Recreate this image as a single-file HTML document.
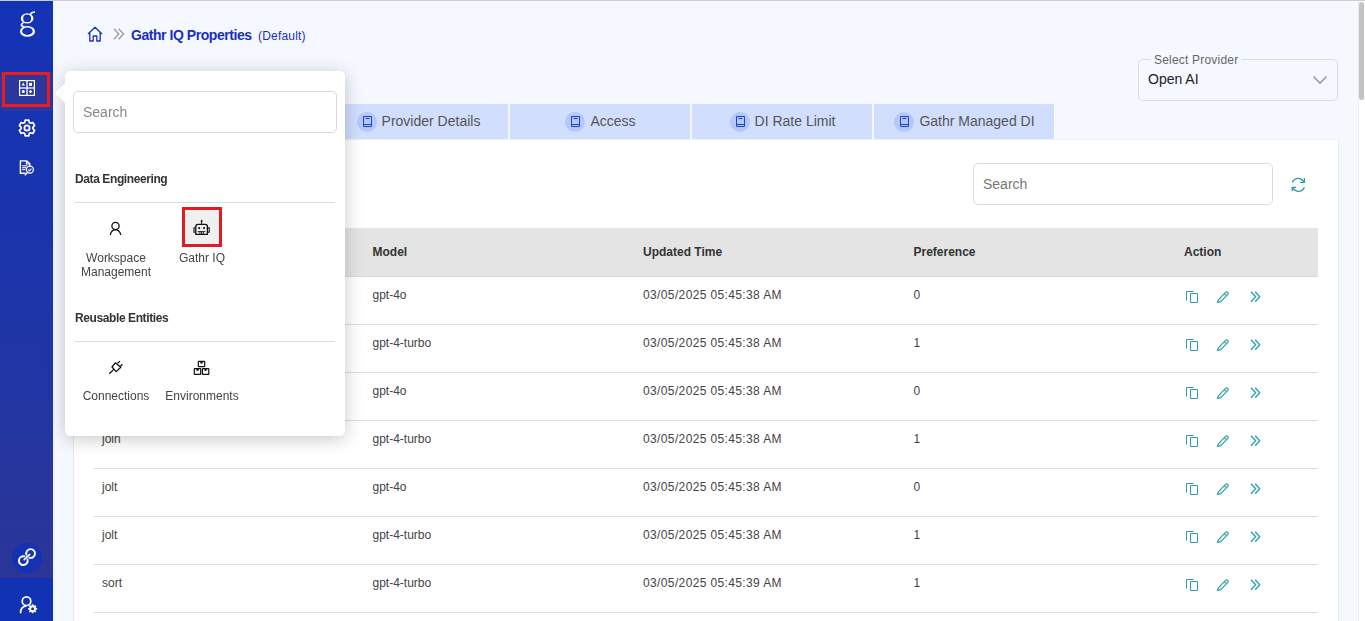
<!DOCTYPE html>
<html><head><meta charset="utf-8">
<style>
*{box-sizing:border-box;margin:0;padding:0}
html,body{width:1365px;height:621px;overflow:hidden}
body{position:relative;background:#f5f8fe;font-family:"Liberation Sans",sans-serif;color:#444}
.abs{position:absolute}
#topline{position:absolute;left:0;top:0;width:1365px;height:1px;background:#cdcdcd;z-index:50}
#sb{position:absolute;left:0;top:0;width:53px;height:621px;background:linear-gradient(#1333b6 0px,#1934ae 190px,#2036a6 350px,#2b3696 578px)}
#sbbot{position:absolute;left:0;top:578px;width:53px;height:43px;background:#1232b4}
#sel{position:absolute;left:0;top:72px;width:53px;height:39px;background:#2a379c;border-radius:0 0 3px 4px}
#redbox{position:absolute;left:2px;top:72px;width:48px;height:35px;border:3px solid #e91c24}
#sbline{position:absolute;left:53px;top:0;width:1px;height:621px;background:#eef1f7}
/* scrollbar */
#sctrack{position:absolute;left:1358px;top:1px;width:7px;height:620px;background:#fff;border-left:1px solid #ececec}
#scthumb{position:absolute;left:1359px;top:2px;width:5px;height:98px;background:#c3c3c3;border-radius:3px}
/* breadcrumb */
.bc-title{position:absolute;left:131px;top:27px;font-size:14px;font-weight:bold;letter-spacing:-0.45px;color:#1a2fbe;white-space:nowrap}
.bc-def{position:absolute;left:258px;top:29px;font-size:12px;letter-spacing:0.2px;color:#1a2fbe;white-space:nowrap}
/* select provider */
#prov{position:absolute;left:1138px;top:59px;width:200px;height:42px;border:1px solid #dcdcdc;border-radius:5px}
#provlbl{position:absolute;left:1150px;top:53px;padding:0 4px;background:#f5f8fe;font-size:12px;letter-spacing:0.2px;color:#666;white-space:nowrap}
#provval{position:absolute;left:1148px;top:71px;font-size:14px;color:#222;white-space:nowrap}
/* tabs */
.tab{position:absolute;top:104px;height:35px;width:180px;background:#d1defe;display:flex;align-items:center;justify-content:center;font-size:14px;color:#555;white-space:nowrap;padding-bottom:1px}
.tab .ic{width:20px;height:20px;border-radius:50%;background:#b3c8fb;margin-left:1px;margin-right:5px;position:relative;top:1px;flex:none}
.tab .ic svg{position:absolute;left:5px;top:3px}
/* card */
#card{position:absolute;left:73px;top:139px;width:1266px;height:482px;background:#fff;border-top:1px solid #eef0f4;border-left:1px solid #e3e7ee;border-right:1px solid #e9ecf1}
#tsearch{position:absolute;left:973px;top:163px;width:300px;height:42px;border:1px solid #dcdcdc;border-radius:5px;background:#fff}
#tsearch span{position:absolute;left:9px;top:11.5px;font-size:14px;color:#777}
/* table */
#thead{position:absolute;left:94px;top:228px;width:1224px;height:49px;background:#e4e4e4;border-bottom:1px solid #d9d9d9}
.th{position:absolute;top:245px;font-size:12px;font-weight:bold;color:#333;white-space:nowrap}
.row{position:absolute;left:94px;width:1224px;height:48px;border-bottom:1px solid #dedede}
.td{position:absolute;font-size:12px;color:#444;white-space:nowrap}
.dt{letter-spacing:0.37px}
.acts{position:absolute;left:1186px}
/* popover */
#pop{position:absolute;left:65px;top:71px;width:280px;height:365px;background:#fff;border-radius:5px;will-change:transform;box-shadow:0 3px 18px rgba(0,0,0,0.22);z-index:20}
#poparrow{position:absolute;left:55px;top:83px;width:0;height:0;border-top:10px solid transparent;border-bottom:10px solid transparent;border-right:10px solid #fff;z-index:21}
#psearch{position:absolute;left:8px;top:20px;width:264px;height:42px;border:1px solid #d9d9d9;border-radius:5px}
#psearch span{position:absolute;left:9px;top:12px;font-size:14px;color:#888}
.sect{position:absolute;left:10px;font-size:12px;font-weight:bold;letter-spacing:-0.4px;color:#333;white-space:nowrap}
.divd{position:absolute;left:10px;width:260px;height:1px;background:#d6dde6}
.item{position:absolute;width:86px;text-align:center;font-size:12px;color:#444;line-height:14px}
</style></head>
<body>
<div id="topline"></div>
<div id="sb"></div>
<div id="sbbot"></div>
<div id="sel"></div>
<div id="redbox"></div>
<div id="sbline"></div>

<!-- sidebar icons -->
<svg class="abs" style="left:12px;top:5px" width="30" height="37" viewBox="12 5 30 37">
 <path fill="#fff" fill-rule="evenodd" d="M20.85 18.40 a6.30 5.20 0 1 0 12.60 0 a6.30 5.20 0 1 0 -12.60 0Z M23.15 18.45 a4.00 3.85 0 1 0 8.00 0 a4.00 3.85 0 1 0 -8.00 0Z"/>
 <path fill="#fff" fill-rule="evenodd" d="M20.00 31.40 a7.50 5.40 0 1 0 15.00 0 a7.50 5.40 0 1 0 -15.00 0Z M22.10 31.20 a5.30 3.70 0 1 0 10.60 0 a5.30 3.70 0 1 0 -10.60 0Z"/>
 <path d="M30.4 14.4 Q31.4 12 35 12" fill="none" stroke="#fff" stroke-width="1.7"/>
 <path d="M23.4 22.6 Q20.8 24.2 21.5 25.8 Q22.2 26.6 24.6 26.4" fill="none" stroke="#fff" stroke-width="1.5"/>
</svg>
<svg class="abs" style="left:19px;top:80px" width="16" height="16" viewBox="0 0 16 16">
 <rect x="0.6" y="0.6" width="14.8" height="14.8" fill="none" stroke="#fff" stroke-width="1.2"/>
 <line x1="8" y1="0.6" x2="8" y2="15.4" stroke="#fff" stroke-width="1.3"/>
 <line x1="0.6" y1="8" x2="15.4" y2="8" stroke="#fff" stroke-width="1.3"/>
 <path d="M4.3 2.6 L6 5.5 L2.6 5.5Z" fill="#fff"/>
 <rect x="10" y="2.9" width="3" height="3" fill="#fff"/>
 <circle cx="4.3" cy="11.6" r="1.5" fill="#fff"/>
 <path d="M11.5 9.7 L13.2 11.6 L11.5 13.5 L9.8 11.6Z" fill="#fff"/>
</svg>
<svg class="abs" style="left:18px;top:119px" width="18" height="18" viewBox="0 0 18 18"><path fill="none" stroke="#fff" stroke-width="1.7" stroke-linejoin="round" d="M6.75 3.44 L7.20 1.21 L10.80 1.21 L11.25 3.44 L12.69 4.27 L14.85 3.54 L16.65 6.66 L14.94 8.16 L14.94 9.84 L16.65 11.34 L14.85 14.46 L12.69 13.73 L11.25 14.56 L10.80 16.79 L7.20 16.79 L6.75 14.56 L5.31 13.73 L3.15 14.46 L1.35 11.34 L3.06 9.84 L3.06 8.16 L1.35 6.66 L3.15 3.54 L5.31 4.27Z"/><circle cx="9" cy="9" r="2.6" fill="none" stroke="#fff" stroke-width="1.8"/></svg>
<svg class="abs" style="left:19px;top:160px" width="16" height="16" viewBox="0 0 16 16">
 <path fill="none" stroke="#fff" stroke-width="1.4" d="M6.6 13.2H1.4V0.9h6.4l3 3v2.6"/>
 <path fill="none" stroke="#fff" stroke-width="1.2" d="M7.4 1v3h3"/>
 <line x1="3.2" y1="5.8" x2="8.2" y2="5.8" stroke="#fff" stroke-width="1.1"/>
 <line x1="3.2" y1="7.7" x2="7" y2="7.7" stroke="#fff" stroke-width="1.1"/>
 <line x1="3.2" y1="9.6" x2="6.2" y2="9.6" stroke="#fff" stroke-width="1.1"/>
 <circle cx="10.9" cy="9.6" r="3.5" fill="none" stroke="#fff" stroke-width="1.3"/>
 <path fill="none" stroke="#fff" stroke-width="1.2" d="M9.3 9.7l1.1 1.1 2-2.2"/>
 <line x1="8.6" y1="12.3" x2="5.8" y2="15.4" stroke="#fff" stroke-width="1.3"/>
</svg>
<div class="abs" style="left:12px;top:543px;width:30px;height:30px;border-radius:50%;background:#1632b4"></div>
<svg class="abs" style="left:16px;top:546px" width="22" height="22" viewBox="16 546 22 22"><g fill="none" stroke="#fff" stroke-linecap="round">
<path stroke-width="1.9" d="M26.35 554.64 A4.40 4.40 0 1 1 29.46 557.75"/><path stroke-width="1.9" d="M27.55 559.46 A4.40 4.40 0 1 1 24.44 556.35"/><path stroke-width="1.6" d="M24.2 559.7 L29.7 554.4"/></g></svg>
<svg class="abs" style="left:18px;top:594px" width="22" height="22" viewBox="18 594 22 22">
<circle cx="26.5" cy="601.2" r="4.3" fill="none" stroke="#fff" stroke-width="1.7"/>
<path d="M20.6 612.6 Q20.8 606.8 25.6 606.2" fill="none" stroke="#fff" stroke-width="1.7" stroke-linecap="round"/>
<path fill="#fff" fill-rule="evenodd" d="M35.75 607.81 L37.13 608.00 L37.13 609.60 L35.75 609.79 L35.53 610.32 L36.37 611.44 L35.24 612.57 L34.12 611.73 L33.59 611.95 L33.40 613.33 L31.80 613.33 L31.61 611.95 L31.08 611.73 L29.96 612.57 L28.83 611.44 L29.67 610.32 L29.45 609.79 L28.07 609.60 L28.07 608.00 L29.45 607.81 L29.67 607.28 L28.83 606.16 L29.96 605.03 L31.08 605.87 L31.61 605.65 L31.80 604.27 L33.40 604.27 L33.59 605.65 L34.12 605.87 L35.24 605.03 L36.37 606.16 L35.53 607.28Z M31.10 608.80 a1.5 1.5 0 1 0 3 0 a1.5 1.5 0 1 0 -3 0Z"/>
</svg>

<!-- scrollbar -->
<div id="sctrack"></div>
<div id="scthumb"></div>

<!-- breadcrumb -->
<svg class="abs" style="left:87px;top:26px" width="16" height="16" viewBox="0 0 16 16">
 <path fill="none" stroke="#1a2fbe" stroke-width="1.3" stroke-linejoin="round" d="M1 8 L8 1.2 L15 8 M2.8 6.5 V15 H6.2 V10 H9.8 V15 H13.2 V6.5"/>
</svg>
<svg class="abs" style="left:113px;top:28px" width="12" height="12" viewBox="0 0 12 12">
 <path fill="none" stroke="#9a9a9a" stroke-width="1.3" d="M1 0.8 L5.8 6 L1 11.2 M5.6 0.8 L10.6 6 L5.6 11.2"/>
</svg>
<div class="bc-title">Gathr IQ Properties</div>
<div class="bc-def">(Default)</div>

<!-- provider select -->
<div id="prov"></div>
<div id="provlbl">Select Provider</div>
<div id="provval">Open AI</div>
<svg class="abs" style="left:1313px;top:76px" width="14" height="8" viewBox="0 0 14 8">
 <path fill="none" stroke="#888" stroke-width="1.2" d="M0.5 0.5 L7 7.2 L13.5 0.5"/>
</svg>

<!-- tabs -->
<div class="tab" style="left:146px">Properties</div>
<div class="tab" style="left:328px"><span class="ic"><svg width="11" height="14" viewBox="0 0 11 14"><path fill="none" stroke="#2040d4" stroke-width="1" d="M1.5 11.5V1.5h8V11.5z M1.5 9.5h8 M3.5 3.5h4"/></svg></span>Provider Details</div>
<div class="tab" style="left:510px"><span class="ic"><svg width="11" height="14" viewBox="0 0 11 14"><path fill="none" stroke="#2040d4" stroke-width="1" d="M1.5 11.5V1.5h8V11.5z M1.5 9.5h8 M3.5 3.5h4"/></svg></span>Access</div>
<div class="tab" style="left:692px"><span class="ic"><svg width="11" height="14" viewBox="0 0 11 14"><path fill="none" stroke="#2040d4" stroke-width="1" d="M1.5 11.5V1.5h8V11.5z M1.5 9.5h8 M3.5 3.5h4"/></svg></span>DI Rate Limit</div>
<div class="tab" style="left:874px"><span class="ic"><svg width="11" height="14" viewBox="0 0 11 14"><path fill="none" stroke="#2040d4" stroke-width="1" d="M1.5 11.5V1.5h8V11.5z M1.5 9.5h8 M3.5 3.5h4"/></svg></span>Gathr Managed DI</div>

<!-- card -->
<div id="card"></div>
<div id="tsearch"><span>Search</span></div>
<svg class="abs" style="left:1290px;top:176px" width="17" height="17" viewBox="1290 176 17 17"><g fill="none" stroke="#27a0a6" stroke-width="1.3">
<path d="M1292.3 182.6 Q1294 178.4 1298.2 178.4 Q1301.6 178.4 1303.8 181.6"/>
<path d="M1304.4 177.9 V182.3 H1300.1"/>
<path d="M1304.4 187.2 Q1302.8 191.3 1298.4 191.3 Q1295 191.3 1292.9 188.2"/>
<path d="M1292.3 191 V187.4 H1296"/>
</g></svg>
<div id="thead"></div>
<div class="th" style="left:102px">Name</div>
<div class="th" style="left:372.5px">Model</div>
<div class="th" style="left:643px">Updated Time</div>
<div class="th" style="left:913.5px">Preference</div>
<div class="th" style="left:1184px">Action</div>
<div class="row" style="top:277px"></div>
<div class="td" style="left:102px;top:288px">expression</div>
<div class="td" style="left:372.5px;top:288px">gpt-4o</div>
<div class="td dt" style="left:643px;top:288px">03/05/2025 05:45:38 AM</div>
<div class="td" style="left:913.5px;top:288px">0</div>
<svg class="abs" style="left:1185px;top:291px" width="14" height="13" viewBox="0 0 14 13"><path fill="none" stroke="#2aa0a8" stroke-width="1" d="M8.5 0.5H1.5V9.5 M5.5 2.5H12.5V11.5H5.5Z"/></svg>
<svg class="abs" style="left:1215.8px;top:291px" width="14" height="13" viewBox="0 0 14 13"><path fill="none" stroke="#2aa0a8" stroke-width="1.2" d="M2.6 8.6 L9.6 1.4 A1.3 1.3 0 0 1 11.8 3.4 L4.6 10.6 L1.6 11.4 Z M8.4 2.6 L10.6 4.8"/></svg>
<svg class="abs" style="left:1250px;top:291px" width="12" height="12" viewBox="0 0 12 12"><path fill="none" stroke="#2aa0a8" stroke-width="1.3" d="M1 0.8 L5.6 5.8 L1 10.8 M5.2 0.8 L9.8 5.8 L5.2 10.8"/></svg>
<div class="row" style="top:325px"></div>
<div class="td" style="left:102px;top:336px">expression</div>
<div class="td" style="left:372.5px;top:336px">gpt-4-turbo</div>
<div class="td dt" style="left:643px;top:336px">03/05/2025 05:45:38 AM</div>
<div class="td" style="left:913.5px;top:336px">1</div>
<svg class="abs" style="left:1185px;top:339px" width="14" height="13" viewBox="0 0 14 13"><path fill="none" stroke="#2aa0a8" stroke-width="1" d="M8.5 0.5H1.5V9.5 M5.5 2.5H12.5V11.5H5.5Z"/></svg>
<svg class="abs" style="left:1215.8px;top:339px" width="14" height="13" viewBox="0 0 14 13"><path fill="none" stroke="#2aa0a8" stroke-width="1.2" d="M2.6 8.6 L9.6 1.4 A1.3 1.3 0 0 1 11.8 3.4 L4.6 10.6 L1.6 11.4 Z M8.4 2.6 L10.6 4.8"/></svg>
<svg class="abs" style="left:1250px;top:339px" width="12" height="12" viewBox="0 0 12 12"><path fill="none" stroke="#2aa0a8" stroke-width="1.3" d="M1 0.8 L5.6 5.8 L1 10.8 M5.2 0.8 L9.8 5.8 L5.2 10.8"/></svg>
<div class="row" style="top:373px"></div>
<div class="td" style="left:102px;top:384px">join</div>
<div class="td" style="left:372.5px;top:384px">gpt-4o</div>
<div class="td dt" style="left:643px;top:384px">03/05/2025 05:45:38 AM</div>
<div class="td" style="left:913.5px;top:384px">0</div>
<svg class="abs" style="left:1185px;top:387px" width="14" height="13" viewBox="0 0 14 13"><path fill="none" stroke="#2aa0a8" stroke-width="1" d="M8.5 0.5H1.5V9.5 M5.5 2.5H12.5V11.5H5.5Z"/></svg>
<svg class="abs" style="left:1215.8px;top:387px" width="14" height="13" viewBox="0 0 14 13"><path fill="none" stroke="#2aa0a8" stroke-width="1.2" d="M2.6 8.6 L9.6 1.4 A1.3 1.3 0 0 1 11.8 3.4 L4.6 10.6 L1.6 11.4 Z M8.4 2.6 L10.6 4.8"/></svg>
<svg class="abs" style="left:1250px;top:387px" width="12" height="12" viewBox="0 0 12 12"><path fill="none" stroke="#2aa0a8" stroke-width="1.3" d="M1 0.8 L5.6 5.8 L1 10.8 M5.2 0.8 L9.8 5.8 L5.2 10.8"/></svg>
<div class="row" style="top:421px"></div>
<div class="td" style="left:102px;top:432px">join</div>
<div class="td" style="left:372.5px;top:432px">gpt-4-turbo</div>
<div class="td dt" style="left:643px;top:432px">03/05/2025 05:45:38 AM</div>
<div class="td" style="left:913.5px;top:432px">1</div>
<svg class="abs" style="left:1185px;top:435px" width="14" height="13" viewBox="0 0 14 13"><path fill="none" stroke="#2aa0a8" stroke-width="1" d="M8.5 0.5H1.5V9.5 M5.5 2.5H12.5V11.5H5.5Z"/></svg>
<svg class="abs" style="left:1215.8px;top:435px" width="14" height="13" viewBox="0 0 14 13"><path fill="none" stroke="#2aa0a8" stroke-width="1.2" d="M2.6 8.6 L9.6 1.4 A1.3 1.3 0 0 1 11.8 3.4 L4.6 10.6 L1.6 11.4 Z M8.4 2.6 L10.6 4.8"/></svg>
<svg class="abs" style="left:1250px;top:435px" width="12" height="12" viewBox="0 0 12 12"><path fill="none" stroke="#2aa0a8" stroke-width="1.3" d="M1 0.8 L5.6 5.8 L1 10.8 M5.2 0.8 L9.8 5.8 L5.2 10.8"/></svg>
<div class="row" style="top:469px"></div>
<div class="td" style="left:102px;top:480px">jolt</div>
<div class="td" style="left:372.5px;top:480px">gpt-4o</div>
<div class="td dt" style="left:643px;top:480px">03/05/2025 05:45:38 AM</div>
<div class="td" style="left:913.5px;top:480px">0</div>
<svg class="abs" style="left:1185px;top:483px" width="14" height="13" viewBox="0 0 14 13"><path fill="none" stroke="#2aa0a8" stroke-width="1" d="M8.5 0.5H1.5V9.5 M5.5 2.5H12.5V11.5H5.5Z"/></svg>
<svg class="abs" style="left:1215.8px;top:483px" width="14" height="13" viewBox="0 0 14 13"><path fill="none" stroke="#2aa0a8" stroke-width="1.2" d="M2.6 8.6 L9.6 1.4 A1.3 1.3 0 0 1 11.8 3.4 L4.6 10.6 L1.6 11.4 Z M8.4 2.6 L10.6 4.8"/></svg>
<svg class="abs" style="left:1250px;top:483px" width="12" height="12" viewBox="0 0 12 12"><path fill="none" stroke="#2aa0a8" stroke-width="1.3" d="M1 0.8 L5.6 5.8 L1 10.8 M5.2 0.8 L9.8 5.8 L5.2 10.8"/></svg>
<div class="row" style="top:517px"></div>
<div class="td" style="left:102px;top:528px">jolt</div>
<div class="td" style="left:372.5px;top:528px">gpt-4-turbo</div>
<div class="td dt" style="left:643px;top:528px">03/05/2025 05:45:38 AM</div>
<div class="td" style="left:913.5px;top:528px">1</div>
<svg class="abs" style="left:1185px;top:531px" width="14" height="13" viewBox="0 0 14 13"><path fill="none" stroke="#2aa0a8" stroke-width="1" d="M8.5 0.5H1.5V9.5 M5.5 2.5H12.5V11.5H5.5Z"/></svg>
<svg class="abs" style="left:1215.8px;top:531px" width="14" height="13" viewBox="0 0 14 13"><path fill="none" stroke="#2aa0a8" stroke-width="1.2" d="M2.6 8.6 L9.6 1.4 A1.3 1.3 0 0 1 11.8 3.4 L4.6 10.6 L1.6 11.4 Z M8.4 2.6 L10.6 4.8"/></svg>
<svg class="abs" style="left:1250px;top:531px" width="12" height="12" viewBox="0 0 12 12"><path fill="none" stroke="#2aa0a8" stroke-width="1.3" d="M1 0.8 L5.6 5.8 L1 10.8 M5.2 0.8 L9.8 5.8 L5.2 10.8"/></svg>
<div class="row" style="top:565px"></div>
<div class="td" style="left:102px;top:576px">sort</div>
<div class="td" style="left:372.5px;top:576px">gpt-4-turbo</div>
<div class="td dt" style="left:643px;top:576px">03/05/2025 05:45:39 AM</div>
<div class="td" style="left:913.5px;top:576px">1</div>
<svg class="abs" style="left:1185px;top:579px" width="14" height="13" viewBox="0 0 14 13"><path fill="none" stroke="#2aa0a8" stroke-width="1" d="M8.5 0.5H1.5V9.5 M5.5 2.5H12.5V11.5H5.5Z"/></svg>
<svg class="abs" style="left:1215.8px;top:579px" width="14" height="13" viewBox="0 0 14 13"><path fill="none" stroke="#2aa0a8" stroke-width="1.2" d="M2.6 8.6 L9.6 1.4 A1.3 1.3 0 0 1 11.8 3.4 L4.6 10.6 L1.6 11.4 Z M8.4 2.6 L10.6 4.8"/></svg>
<svg class="abs" style="left:1250px;top:579px" width="12" height="12" viewBox="0 0 12 12"><path fill="none" stroke="#2aa0a8" stroke-width="1.3" d="M1 0.8 L5.6 5.8 L1 10.8 M5.2 0.8 L9.8 5.8 L5.2 10.8"/></svg>
<div class="row" style="top:613px"></div>
<div class="td" style="left:102px;top:624px">sort</div>
<div class="td" style="left:372.5px;top:624px">gpt-4o</div>
<div class="td dt" style="left:643px;top:624px">03/05/2025 05:45:39 AM</div>
<div class="td" style="left:913.5px;top:624px">0</div>
<svg class="abs" style="left:1185px;top:627px" width="14" height="13" viewBox="0 0 14 13"><path fill="none" stroke="#2aa0a8" stroke-width="1" d="M8.5 0.5H1.5V9.5 M5.5 2.5H12.5V11.5H5.5Z"/></svg>
<svg class="abs" style="left:1215.8px;top:627px" width="14" height="13" viewBox="0 0 14 13"><path fill="none" stroke="#2aa0a8" stroke-width="1.2" d="M2.6 8.6 L9.6 1.4 A1.3 1.3 0 0 1 11.8 3.4 L4.6 10.6 L1.6 11.4 Z M8.4 2.6 L10.6 4.8"/></svg>
<svg class="abs" style="left:1250px;top:627px" width="12" height="12" viewBox="0 0 12 12"><path fill="none" stroke="#2aa0a8" stroke-width="1.3" d="M1 0.8 L5.8 6 L1 11.2 M5.6 0.8 L10.6 6 L5.6 11.2"/></svg>

<!-- popover -->
<div id="poparrow"></div>
<div id="pop">
 <div id="psearch"><span>Search</span></div>
 <div class="sect" style="top:101px">Data Engineering</div>
 <div class="divd" style="top:131px"></div>
 <svg class="abs" style="left:44px;top:150px" width="13" height="15" viewBox="109 221 13 15"><circle cx="115.5" cy="225.9" r="3.6" fill="none" stroke="#111" stroke-width="1.3"/><path d="M110.3 235 Q111 230 115.5 229.6 Q120 230 120.7 235" fill="none" stroke="#111" stroke-width="1.3"/></svg>
 <div class="item" style="left:8px;top:180px">Workspace Management</div>
 <div style="position:absolute;left:117px;top:136px;width:40px;height:40px;background:#f0f0f0;border:3px solid #e11b22"></div>
 <svg class="abs" style="left:127px;top:148px" width="18" height="18" viewBox="192 219 18 18"><g fill="none" stroke="#111"><line x1="201.6" y1="221.4" x2="201.6" y2="224.2" stroke-width="1"/><path stroke-width="1.3" d="M195.8 234.3 V226.6 Q195.8 224.4 198 224.4 H205.2 Q207.4 224.4 207.4 226.6 V234.3 Z"/><path stroke-width="1.1" d="M195.6 227.8 H194 V232.2 H195.6 M207.6 227.8 H209.2 V232.2 H207.6"/><path stroke-width="0.9" d="M197.8 231.6 H205.4 M199.9 231.6 V234.3 M201.6 231.6 V234.3 M203.3 231.6 V234.3"/></g><g fill="#111"><circle cx="201.6" cy="220.9" r="1"/><circle cx="199.2" cy="228.1" r="1.05"/><circle cx="204.1" cy="228.1" r="1.05"/></g></svg>
 <div class="item" style="left:94px;top:180px">Gathr IQ</div>
 <div class="sect" style="top:240px">Reusable Entities</div>
 <div class="divd" style="top:270px"></div>
 <svg class="abs" style="left:43px;top:288px" width="16" height="16" viewBox="108 359 16 16"><path fill="none" stroke="#111" stroke-width="1.3" stroke-linejoin="round" d="M112 367 L115.3 362.8 L120.8 367.3 L116.2 371.6 Z M117.6 363.2 L119.8 361.2 M120.2 366.4 L122.4 364.3 M113.6 369.6 L109.2 373.8"/></svg>
 <div class="item" style="left:8px;top:318px">Connections</div>
 <svg class="abs" style="left:128px;top:289px" width="17" height="17" viewBox="193 360 17 17"><g fill="none" stroke="#111" stroke-width="1.2"><rect x="198.3" y="361.4" width="6.4" height="5.2" rx="0.5"/><rect x="194.3" y="368.6" width="6.4" height="5.8" rx="0.5"/><rect x="202.4" y="368.6" width="6.4" height="5.8" rx="0.5"/></g><g fill="#111"><path d="M200.3 361.6 h2.4 v1.2 a1.2 1 0 0 1 -2.4 0z"/><path d="M196.3 368.8 h2.4 v1.3 a1.2 1 0 0 1 -2.4 0z"/><path d="M204.4 368.8 h2.4 v1.3 a1.2 1 0 0 1 -2.4 0z"/></g></svg>
 <div class="item" style="left:94px;top:318px">Environments</div>
</div>

</body></html>
